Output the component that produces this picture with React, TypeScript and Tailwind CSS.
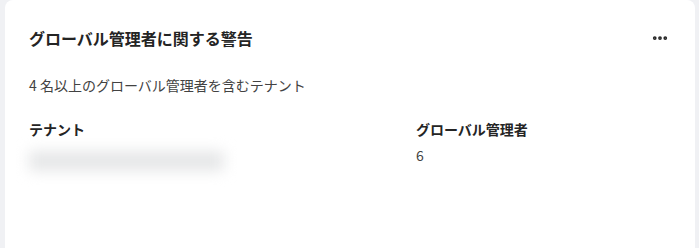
import { MoreHorizontal } from 'lucide-react'

const font = { fontFamily: '"Noto Sans CJK JP", "Noto Sans", sans-serif' }

export default function App() {
    return (
        <div className="w-[699px] h-[248px] bg-[#f0f1f4] pl-[5px] pr-[4px] overflow-hidden" style={font}>
            <div className="bg-white rounded-t-lg h-[260px] pl-[24px] pr-[24px] pt-[26px] text-[#242424]">
                {/* header */}
                <div className="flex items-center justify-between">
                    <h2 className="text-[16px] leading-[24px] font-bold">グローバル管理者に関する警告</h2>
                    <button className="w-[24px] h-[24px] flex items-center justify-center -mr-[1px]">
                        <MoreHorizontal className="w-[18px] h-[18px]" strokeWidth={3} />
                    </button>
                </div>

                <p className="mt-[25px] text-[14px] leading-[20px] text-[#424242]">4 名以上のグローバル管理者を含むテナント</p>

                {/* table */}
                <div className="mt-[24px] grid grid-cols-[387px_1fr] text-[14px] leading-[20px]">
                    <div className="font-semibold">テナント</div>
                    <div className="font-semibold">グローバル管理者</div>
                    <div className="relative h-[30px] mt-[6px] -ml-[10px]">
                        <div className="absolute left-[10px] top-[6px] w-[195px] h-[20px] bg-[#e6e7e8] blur-[7px]" />
                    </div>
                    <div className="mt-[6px] text-[#424242]">6</div>
                </div>
            </div>
        </div>
    )
}
